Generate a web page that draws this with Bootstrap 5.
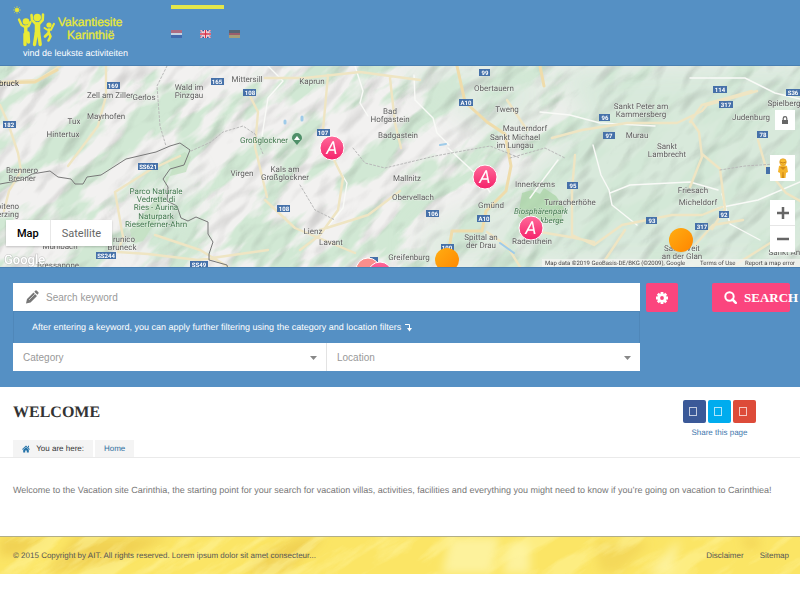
<!DOCTYPE html>
<html lang="en">
<head>
<meta charset="utf-8">
<meta name="viewport" content="width=device-width, initial-scale=1">
<title>Vakantiesite Karinthië</title>
<link href="https://cdn.jsdelivr.net/npm/bootstrap@5.3.0/dist/css/bootstrap.min.css" rel="stylesheet">
<style>
  body { font-family: "Liberation Sans", Arial, sans-serif; font-size: 9px; color: #777; background: #fff; text-rendering: geometricPrecision; }
  svg { display: block; }
  a { text-decoration: none; }
  .site-header { background: #5590c4; height: 65px; }
  .brand-link { margin-left: 13px; width: 118px; }
  .lang-list { margin-left: 40px; padding-top: 5px; }
  .lang-bar { border-top: 4px solid #e3e64a; width: 53px; }
  .lang-flags { padding-top: 21px; gap: 18px; }
  .map-area { height: 203px; border-top: 1px solid #4a80b2; border-bottom: 1px solid #4a80b2; overflow: hidden; }
  .map-area > svg { width: 100%; height: 202px; }
  .map-area text { font-family: Roboto, sans-serif; font-size: 8px; fill: #5f5f5f; stroke: #f6f6f3; stroke-width: 1px; stroke-opacity: .5; paint-order: stroke; text-anchor: middle; }
  .map-area .park text { fill: #437a50; }
  .map-area .shields text { font-size: 6px; font-weight: 700; fill: #fff; stroke: none; }
  .map-area .pins text { font-size: 18px; font-style: italic; fill: #fff; stroke: none; }
  .map-area .credits text { font-size: 6px; fill: #444; text-anchor: start; }
  .map-area .wordmark { font-size: 13px; font-weight: 500; fill: #fff; stroke: #999; stroke-width: 1px; text-anchor: start; }
  .map-type { left: 6px; bottom: 21px; box-shadow: 0 1px 2px #0003; }
  .map-type button { height: 26px; border: 0; background: #fff; color: #666; font: 11px Roboto, sans-serif; padding: 0 11px; }
  .map-type button.is-on { color: #000; font-weight: 500; border-right: 1px solid #e8e8e8; }
  .map-tools { right: 5px; top: 44px; }
  .map-tools button { width: 25px; height: 26px; border: 0; padding: 0; background: #fff; display: flex; align-items: center; justify-content: center; }
  .map-tools .lock-btn { width: 20px; height: 20px; }
  .map-tools .peg { margin: 25px 0 19px; }
  .map-tools .zoom-in { border-bottom: 1px solid #e6e6e6; }
  .search-area { background: #5590c4; padding: 15px 10px 16px 13px; }
  .search-panel input, .search-panel select { border: 0; border-radius: 0; height: 28px; width: 100%; background-color: #fff; color: #999; font-size: 10px; outline: 0; }
  .search-panel input { padding: 0 10px 0 33px; }
  .search-panel input::placeholder { color: #999; opacity: 1; }
  .search-panel select { appearance: none; padding: 0 10px; }
  .search-panel .drop { flex: 1; position: relative; }
  .search-panel .drop + .drop { border-left: 1px solid #e3e3e3; }
  .drop svg { position: absolute; right: 9px; top: 13px; pointer-events: none; }
  .pencil { position: absolute; left: 13px; top: 7px; }
  .hint { height: 32px; padding-left: 18px; color: #fff; border: 1px solid #4f87b9; border-width: 1px 1px 0; }
  .pink { background: #fb457e; border: 0; border-radius: 2px; height: 29px; color: #fff; }
  .gear-btn { width: 32px; margin-left: 6px; padding: 0; }
  .go-btn { width: 78px; margin-left: 34px; padding: 0 0 0 12px; gap: 7px; white-space: nowrap; font: 700 13px "Liberation Serif", serif; }
  .title-row { padding: 13px 44px 0 13px; height: 53px; }
  h1 { font: 700 16px/26px "Liberation Serif", serif; color: #333; margin: 0; }
  .share-col a { color: #3f78ad; font-size: 8px; line-height: 12px; }
  .share-col .nets { gap: 2px; }
  .share-col .net { width: 23px; height: 23px; border-radius: 2px; padding-right: 4px; }
  .net i { width: 8px; height: 9px; border: 1px solid #ffffffb0; }
  .fb { background: #3b5998; } .tw { background: #00acee; } .gp { background: #dd4b39; }
  .crumbs { padding-left: 13px; gap: 2px; border-bottom: 1px solid #eaeaea; font-size: 8px; color: #333; }
  .crumbs > * { background: #f4f4f4; height: 17px; padding: 0 9px; }
  .crumbs a { color: #2f6e9f; }
  .intro { padding: 26px 13px 40px; line-height: 12px; margin: 0; }
  .site-footer { border-top: 1px solid #b1ae88; height: 38px; padding: 0 11px 0 13px; color: #555; font-size: 8px; }
  .site-footer a { color: #555; }
  .site-footer > svg { position: absolute; inset: 0; width: 100%; height: 100%; }
</style>
<script src="https://cdn.jsdelivr.net/npm/bootstrap@5.3.0/dist/js/bootstrap.bundle.min.js"></script>
</head>
<body>

<header class="site-header d-flex">
  <a href="#" class="brand-link" aria-label="Vakantiesite Karinthië">
    <svg width="118" height="62" viewBox="13 0 118 62" font-family="Liberation Sans, Arial, sans-serif">
      <g stroke="#e9ea35" fill="none" stroke-linecap="round" stroke-linejoin="round">
        <path d="M14.500 7.500l5 5M19.500 7.500l-5 5M17 6.500v7M13.500 10h7" stroke-width="1" opacity=".6"/>
        <circle cx="17" cy="10" r="2" fill="#e9ea35" stroke="none"/>
        <path d="M19 19.500l2.500 5.500 3.500 2 3.500-1 2-4" stroke-width="2.400"/>
        <path d="M25.800 27v8M25 34v10.500M28 33l.5 9" stroke-width="3.400"/>
        <path d="M31.500 15l.5 5 3.500 3.500h4l3.200-3.500.3-5.500" stroke-width="2.600"/>
        <path d="M37.500 25v8" stroke-width="5.500"/>
        <path d="M36.300 33l-1.800 11.500M38.700 33l1.500 11.500" stroke-width="3.400"/>
        <path d="M44.500 28l3 1.800h3.500l3-6" stroke-width="2"/>
        <path d="M49 29.500l-.5 4M48.500 33l-3.500 3.500 M49 33l1.500 3.500-2 4" stroke-width="2.600"/>
      </g>
      <g fill="#e9ea35"><circle cx="26" cy="21.500" r="3.300"/><circle cx="37.300" cy="17.500" r="3.700"/><circle cx="49" cy="25" r="2.600"/></g>
      <g fill="#e9ea35" stroke="#e9ea35" stroke-width=".3" font-size="12">
        <text x="58" y="26">Vakantiesite</text>
        <text x="67" y="39">Karinthië</text>
      </g>
      <text x="23" y="56" font-size="9" fill="#fff">vind de leukste activiteiten</text>
    </svg>
  </a>
  <nav class="lang-list" aria-label="Language">
    <div class="lang-bar"></div>
    <div class="lang-flags d-flex">
      <a href="#" aria-label="Nederlands"><svg width="11" height="8" viewBox="0 0 11 8" opacity=".75"><path fill="#e9e9ee" d="M0 0h11v8H0z"/><path fill="#c9606c" d="M0 0h11v3H0z"/><path fill="#3c5ea6" d="M0 5h11v3H0z"/></svg></a>
      <a href="#" aria-label="English"><svg width="11" height="8" viewBox="0 0 11 8"><path fill="#3b4f96" d="M0 0h11v8H0z"/><path stroke="#fff" stroke-width="1.800" d="M0 0l11 8M11 0L0 8"/><path stroke="#d04055" stroke-width=".7" d="M0 0l11 8M11 0L0 8"/><path stroke="#fff" stroke-width="3" d="M5.500 0v8M0 4h11"/><path stroke="#d5334b" stroke-width="1.500" d="M5.500 0v8M0 4h11"/></svg></a>
      <a href="#" aria-label="Deutsch"><svg width="11" height="8" viewBox="0 0 11 8" opacity=".7"><path fill="#555" d="M0 0h11v3H0z"/><path fill="#b94a48" d="M0 3h11v2H0z"/><path fill="#c9a65a" d="M0 5h11v3H0z"/></svg></a>
    </div>
  </nav>
</header>

<section class="map-area position-relative" aria-label="Map">
  <svg viewBox="0 66 800 202" preserveAspectRatio="xMidYMid slice">
    <defs>
      <filter id="relief" x="0" y="0" width="100%" height="100%" color-interpolation-filters="sRGB">
        <feTurbulence type="fractalNoise" baseFrequency=".025 .05" numOctaves="2" seed="7"/>
        <feColorMatrix values="0 0 0 0 0  0 0 0 0 0  0 0 0 0 0  1 0 0 0 0"/>
        <feDiffuseLighting surfaceScale="9" diffuseConstant="1.150" lighting-color="#fff"><feDistantLight azimuth="250" elevation="60"/></feDiffuseLighting>
      </filter>
      <filter id="valley" x="0" y="0" width="100%" height="100%" color-interpolation-filters="sRGB">
        <feTurbulence type="fractalNoise" baseFrequency=".014 .045" numOctaves="4" seed="12"/>
        <feColorMatrix values="0 0 0 0 .82  0 0 0 0 .91  0 0 0 0 .83  0 7 0 0 -3.300"/>
      </filter>
      <filter id="soft"><feGaussianBlur stdDeviation="14"/></filter>
      <linearGradient id="pinFill" x1="0" y1="0" x2="0" y2="1"><stop offset="0" stop-color="#ff6a9a"/><stop offset="1" stop-color="#f5216a"/></linearGradient>
      <linearGradient id="sunFill" x1="0" y1="0" x2="1" y2="1"><stop offset="0" stop-color="#ffad12"/><stop offset="1" stop-color="#ff8600"/></linearGradient>
    </defs>
    <path fill="#f2f1f0" d="M0 66h800v202H0z"/>
    <rect x="-100" y="-300" width="1100" height="1000" filter="url(#valley)" transform="rotate(-42 400 165)"/>
    <g filter="url(#soft)" fill="#d3e8d7">
      <path d="M545 66l40 50-60 60 20 92h280V60z" opacity=".85"/>
      <path d="M390 60h150l10 60-60 20zM420 230l130-60v100H420z" opacity=".6"/>
      <path d="M145 200l40-30 5 50-40 40z" opacity=".7"/>
    </g>
    <rect x="-100" y="-300" width="1100" height="1000" filter="url(#relief)" transform="rotate(-42 400 165)" style="mix-blend-mode:multiply" opacity=".17"/>
    <path fill="#c4e0c3" opacity=".85" d="M130 230l18-22 16-18 8-20-5-8 18-10 6 5-5 15-20 5-3 20-6 22-14 22-10 2z"/>
    <path fill="#aed6aa" opacity=".8" d="M522 193l10-3 8 4 4-6 12 8 8 12-4 16-14-6-14 8-14-10z"/>
    <g fill="none" stroke-linecap="round" stroke-linejoin="round">
      <g stroke="#f9faf7" stroke-width="1.400">
        <path d="M355 66l8 25-3 12 8 13M414 75l1 25 18 18 4 15 12 12M268 66l15 15-15 17-6 38M593 145l8 30 8 15 3 15 25 20M540 112l30 3 30 8 55 3M610 193l20-8 60-3 28 8M690 78l55 0 30 15 25 6M718 208l40-8 42-18M558 160l-15 20-13 18M448 148l30 28 12 16M335 163l12 20-4 25-18 22M760 240l-30-16-8-30"/>
      </g>
      <g stroke="#efe5c3" stroke-width="2.400">
        <path d="M0 82l38-2 22-14M0 105l8 18 10 30 3 18-12 20-5 20M68 166l30-40 8-30 0-30M115 192l8 45-5 15 30 2 50 6 70-10M115 192l35-22 30-14M248 92l10 20-3 35 12 50M265 78l40 0 55-6 60 8M328 75l-5 55M333 158l10 20-5 32-18 25-20 15M265 200l30 28 60 25M320 230l48-15 32-24M390 78l5 45 6 25M507 100l20 30M487 232l20 14 15 24M552 138l30-8 45-7 50 0 25-12 5-6 50-14M690 122l12-17 50-14M575 155l-3 35 0 45 22 10 28-20 50-10 30 0 20-8M692 122l7 10 3 25-12 30M702 154l18 15 5 40-13 20M758 140l8 28 20 25 14 8M540 232l30 5 24 5M695 245l18-20 30-5M625 230l-20 30M775 240l-40 25M155 235l45 15 30 18"/>
      </g>
      <path stroke="#efdcab" stroke-width="3" d="M457 66l8 36 22 20 18 12 6 32-5 25-20 20-4 20-30 0-5 30M0 83l35-1 22-12M540 66l4 20"/>
      <path stroke="#777" stroke-width="1" d="M0 184l22-4 10-6 18-3 8 6 13 2 4 5 8 0 4-7 14-2 25-16 17-4 13-3 14-6 10-3 10 7-6 15-14 4-7 10 5 8-1 14 10 5 4 12 7 3 8-4 12 5 0 12 5 8-4 12 0 6 18 5 3 15"/>
      <path stroke="#b8b8b8" stroke-width="1" stroke-dasharray="2 2" d="M191 151l20-9 12-10 20-6 12 8 8 20M167 66l-10 20 3 40 6 20M353 148l12 15 20 5 50-12 55-10 30 12M300 185l15 25 20 10M510 158l35-10 20 10M720 170l25-4 30-2"/>
      <g stroke="#9fcbe9" stroke-width="3"><path d="M285 121v2M302 117v3"/><path stroke-width="2" d="M440 145l6-1M500 243l14 10"/></g>
    </g>
    <g>
      <text x="9" y="86" style="fill:#333">bruck</text><text x="110" y="98">Zell am Ziller</text><text x="144" y="100">Gerlos</text>
      <text x="189" y="90">Wald im</text><text x="189" y="98">Pinzgau</text><text x="247" y="82">Mittersill</text>
      <text x="312" y="84">Kaprun</text><text x="74" y="124">Tux</text><text x="106" y="119">Mayrhofen</text>
      <text x="63" y="137">Hintertux</text><text x="22" y="173">Brennero</text><text x="22" y="181">Brenner</text>
      <text x="8" y="209">piteno</text><text x="8" y="217">erzing</text>
      <text x="124" y="242">runico</text><text x="122" y="250">Bruneck</text><text x="60" y="249">Mühlbach</text><text x="58" y="268">Bressanone</text>
      <text x="242" y="176">Virgen</text><text x="285" y="172">Kals am</text><text x="285" y="180">Großglockner</text>
      <text x="313" y="234">Lienz</text><text x="331" y="245">Lavant</text><text x="409" y="260">Greifenburg</text>
      <text x="390" y="114">Bad</text><text x="390" y="122">Hofgastein</text><text x="398" y="138">Badgastein</text>
      <text x="407" y="181">Mallnitz</text><text x="413" y="200">Obervellach</text><text x="494" y="91">Obertauern</text>
      <text x="507" y="112">Tweng</text><text x="525" y="131">Mauterndorf</text><text x="515" y="140">Sankt Michael</text><text x="515" y="148">im Lungau</text>
      <text x="491" y="208">Gmünd</text><text x="481" y="240">Spittal an</text><text x="481" y="248">der Drau</text>
      <text x="535" y="187">Innerkrems</text><text x="570" y="205">Turracherhöhe</text><text x="532" y="244">Radenthein</text>
      <text x="641" y="109">Sankt Peter am</text><text x="641" y="117">Kammersberg</text><text x="637" y="138">Murau</text>
      <text x="667" y="149">Sankt</text><text x="667" y="157">Lambrecht</text><text x="751" y="120">Judenburg</text><text x="784" y="106">Spielberg</text>
      <text x="693" y="193">Friesach</text><text x="698" y="205">Micheldorf</text><text x="682" y="251">Sankt Veit</text><text x="682" y="259">an der Glan</text><text x="790" y="255">Sankt Andrä</text>
    </g>
    <g class="park">
      <text x="156" y="194">Parco Naturale</text><text x="156" y="202">Vedrette di</text><text x="156" y="210">Ries - Aurina</text><text x="156" y="219">Naturpark</text><text x="156" y="227">Rieserferner-Ahrn</text>
      <text x="264" y="143">Großglockner</text>
      <g font-style="italic"><text x="541" y="214">Biosphärenpark</text><text x="545" y="223">Nockberge</text></g>
    </g>
    <path fill="#4f8f68" d="M297 145c-3-4-5-5-5-7a5 5 0 0 1 10 0c0 2-2 3-5 7z"/><path fill="#fff" d="M294 140l3-4 3 4z"/>
    <g class="shields">
      <g fill="#4671a9">
        <path d="M107 82h13v7h-13zM211 78h13v7h-13zM243 89h13v7h-13zM3 121h13v7H3zM138 163h20v7h-20zM96 252h20v7H96zM190 261h18v7h-18zM317 129h13v7h-13zM277 205h13v7h-13zM479 69h11v7h-11zM459 99h14v7h-14zM426 210h13v7h-13zM477 215h13v7h-13zM441 244h13v7h-13zM370 257h8v7h-8zM599 114h11v7h-11zM603 132h12v7h-12zM713 86h14v7h-14zM719 101h14v7h-14zM786 89h14v7h-14zM757 131h11v7h-11zM567 182h11v7h-11zM646 217h11v7h-11zM719 211h10v7h-10zM695 223h13v7h-13zM766 167h8v7h-8z"/>
      </g>
      <text x="113" y="88">169</text><text x="217" y="84">165</text><text x="250" y="95">108</text><text x="9" y="127">182</text><text x="148" y="169">SS621</text><text x="106" y="258">SS244</text><text x="199" y="267">SS49</text><text x="323" y="135">107</text><text x="284" y="211">108</text><text x="485" y="75">99</text><text x="466" y="105">A10</text><text x="433" y="216">106</text><text x="484" y="221">A10</text><text x="447" y="250">100</text><text x="605" y="120">96</text><text x="609" y="138">97</text><text x="720" y="92">114</text><text x="726" y="107">317</text><text x="793" y="95">S36</text><text x="763" y="137">78</text><text x="573" y="188">95</text><text x="652" y="223">93</text><text x="724" y="217">92</text><text x="702" y="229">317</text>
    </g>
    <g class="pins">
      <g stroke="#fff" stroke-width="1"><circle cx="368" cy="270" r="12" fill="#fb8e8c"/><circle cx="380" cy="274" r="12" fill="url(#pinFill)"/>
      <circle cx="332" cy="148" r="12" fill="url(#pinFill)"/><circle cx="485" cy="177" r="12" fill="url(#pinFill)"/><circle cx="531" cy="228" r="12" fill="url(#pinFill)"/></g>
      <circle cx="447" cy="260" r="12" fill="url(#sunFill)"/><circle cx="681" cy="240" r="12" fill="url(#sunFill)"/>
      <text x="332" y="154">A</text><text x="485" y="183">A</text><text x="531" y="234">A</text>
    </g>
    <path fill="#f5f5f2" opacity=".7" d="M542 259h258v9H542z"/>
    <g class="credits"><text x="545" y="265">Map data ©2019 GeoBasis-DE/BKG (©2009), Google</text><text x="700" y="265">Terms of Use</text><text x="745" y="265">Report a map error</text></g>
    <text class="wordmark" x="4" y="264">Google</text>
  </svg>
  <div class="map-type position-absolute d-flex"><button type="button" class="is-on">Map</button><button type="button">Satellite</button></div>
  <div class="map-tools position-absolute d-flex flex-column align-items-end">
    <button type="button" class="lock-btn" aria-label="Lock map"><svg width="8" height="9" viewBox="0 0 8 9"><path fill="#666" d="M1 4h6v4H1z"/><path fill="none" stroke="#666" stroke-width="1.200" d="M2.200 4V2.500a1.800 1.800 0 0 1 3.600 0V4"/></svg></button>
    <button type="button" class="peg" aria-label="Street View"><svg width="12" height="21" viewBox="0 0 12 21"><path fill="#f4b32a" d="M2 8q4-2 8 0l1 6-2 1-.5 5H3.500L3 15l-2-1z"/><path fill="#d18b18" d="M5.500 14h1l.5 6H5zM3 9h6l-3 3z"/><circle cx="6" cy="4" r="3.300" fill="#f9bd2e" stroke="#d9941d" stroke-width=".6"/><path d="M3 4q3 2 6 0" stroke="#c9841a" fill="none"/></svg></button>
    <button type="button" class="zoom-in" aria-label="Zoom in"><svg width="12" height="12"><path stroke="#666" stroke-width="2.500" d="M0 6h12M6 0v12"/></svg></button>
    <button type="button" aria-label="Zoom out"><svg width="12" height="12"><path stroke="#666" stroke-width="2.500" d="M0 6h12"/></svg></button>
  </div>
</section>

<form class="search-area d-flex align-items-start">
  <div class="search-panel flex-fill">
    <div class="position-relative">
      <svg class="pencil" width="13" height="14" viewBox="0 0 13 14"><path fill="#777" d="M0 13.500l1-4.500 6.500-6.500 3.500 3.500-6.500 6.500zM8.300 1.700l1.200-1.200q.7-.5 1.400.2l1.500 1.500q.6.700 0 1.300l-1 1.200z"/><path stroke="#fff" stroke-width=".6" d="M3 10l6-6"/></svg>
      <input type="text" placeholder="Search keyword" aria-label="Search keyword">
    </div>
    <div class="hint d-flex align-items-center">After entering a keyword, you can apply further filtering using the category and location filters
      <svg class="ms-1" width="7" height="9" viewBox="0 0 7 9"><path d="M0 1.500h4.500V7" stroke="#fff" fill="none"/><path fill="#fff" d="M2 5h5L4.500 8.500z"/></svg></div>
    <div class="d-flex">
      <div class="drop"><select aria-label="Category"><option>Category</option></select><svg width="7" height="4"><path fill="#888" d="M0 0h7L3.500 4z"/></svg></div>
      <div class="drop"><select aria-label="Location"><option>Location</option></select><svg width="7" height="4"><path fill="#888" d="M0 0h7L3.500 4z"/></svg></div>
    </div>
  </div>
  <button type="button" class="pink gear-btn d-flex align-items-center justify-content-center flex-shrink-0" aria-label="Settings"><svg width="12" height="12" viewBox="-6 -6 12 12"><g stroke="#fff" stroke-width="2.800"><path d="M0-6V6M-6 0H6M-4.200-4.200L4.200 4.200M4.200-4.200L-4.200 4.200"/></g><circle r="4.600" fill="#fff"/><circle r="1.900" fill="#fb457e"/></svg></button>
  <button type="submit" class="pink go-btn d-flex align-items-center flex-shrink-0"><svg class="flex-shrink-0" width="13" height="13" viewBox="0 0 13 13"><circle cx="5.500" cy="5.500" r="4.200" fill="none" stroke="#fff" stroke-width="2"/><path d="M8.500 8.500l3.300 3.300" stroke="#fff" stroke-width="2.500" stroke-linecap="round"/></svg>SEARCH</button>
</form>

<main>
  <div class="title-row d-flex justify-content-between align-items-start">
    <h1>WELCOME</h1>
    <div class="share-col d-flex flex-column align-items-center">
      <div class="nets d-flex">
        <a href="#" class="net fb d-flex align-items-center justify-content-center" aria-label="Facebook"><i></i></a>
        <a href="#" class="net tw d-flex align-items-center justify-content-center" aria-label="Twitter"><i></i></a>
        <a href="#" class="net gp d-flex align-items-center justify-content-center" aria-label="Google Plus"><i></i></a>
      </div>
      <a href="#" class="mt-1">Share this page</a>
    </div>
  </div>
  <nav class="crumbs d-flex" aria-label="Breadcrumb">
    <span class="d-flex align-items-center"><svg class="me-1" width="8" height="8" viewBox="0 0 8 8"><path fill="#2472a8" d="M4 .5L8 4.200l-.6.500L4 1.700.6 4.700 0 4.200zM1.200 4.800L4 2.300l2.800 2.500V7.500H4.800v-2H3.200v2h-2zM6 .8h1v2L6 2z"/></svg>&nbsp;You are here:</span>
    <a href="#" class="d-flex align-items-center">Home</a>
  </nav>
  <p class="intro">Welcome to the Vacation site Carinthia, the starting point for your search for vacation villas, activities, facilities and everything you might need to know if you’re going on vacation to Carinthiea!</p>
</main>

<footer class="site-footer position-relative">
  <svg viewBox="0 0 800 37" preserveAspectRatio="xMidYMid slice" aria-hidden="true">
    <defs>
      <filter id="paint" x="0" y="0" width="100%" height="100%" color-interpolation-filters="sRGB"><feTurbulence type="fractalNoise" baseFrequency=".012 .06" numOctaves="5" seed="4"/><feColorMatrix values="0 0 0 0 1  0 0 0 0 .96  0 0 0 0 .62  5 0 0 0 -2.300"/></filter>
      <filter id="blur6"><feGaussianBlur stdDeviation="5"/></filter>
    </defs>
    <path fill="#fbe565" d="M0 0h800v37H0z"/>
    <g filter="url(#blur6)"><path fill="#eccb4c" opacity=".7" d="M0 0h50L20 18 0 20zM75 0h95l-60 28-65 9zM245 37l15-20 40-17h25l-40 37z"/><path fill="#fdf29c" d="M450 0h50l-8 37h-50zM510 5h20v32h-28zM645 37L680 2l-8 35z"/><path fill="#f0d052" opacity=".6" d="M595 5h55l-30 30h-20zM740 0h20v12h-15z"/></g>
    <rect x="-100" y="-400" width="1000" height="900" filter="url(#paint)" opacity=".5" transform="rotate(-32 400 18)"/>
  </svg>
  <div class="position-relative d-flex justify-content-between align-items-center h-100">
    <span>© 2015 Copyright by AIT. All rights reserved. Lorem ipsum dolor sit amet consecteur...</span>
    <div class="d-flex gap-3"><a href="#">Disclaimer</a><a href="#">Sitemap</a></div>
  </div>
</footer>
</body>
</html>
